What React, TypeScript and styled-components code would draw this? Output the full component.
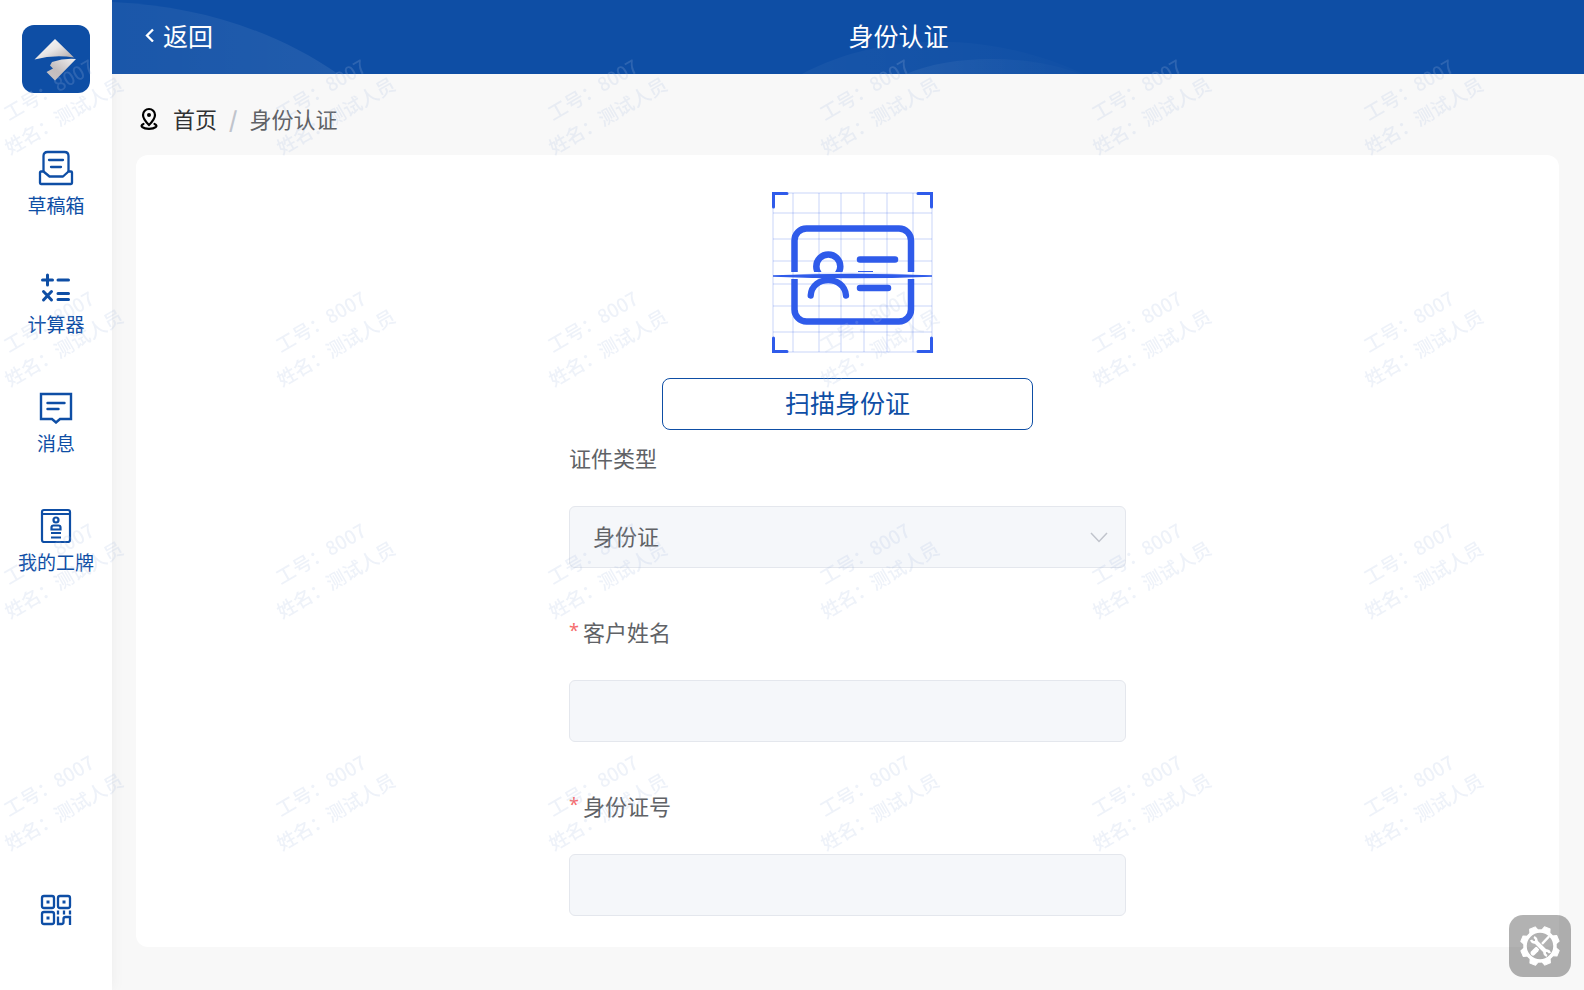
import React from "react";
import styled, { createGlobalStyle } from "styled-components";

const BRAND = "#0e4ea5";
const ACCENT = "#2f5bea";

const GlobalStyle = createGlobalStyle`
  *, *::before, *::after { box-sizing: border-box; }
  body {
    margin: 0;
    background: #f8f8f8;
    color: #606266;
    font-family: "Noto Sans CJK SC", "Noto Sans", sans-serif;
  }
  button, input, select { font-family: inherit; }
`;

const Shell = styled.div`
  display: flex;
  min-height: 100vh;
`;

const Sidebar = styled.aside`
  display: flex;
  flex: none;
  flex-direction: column;
  align-items: center;
  width: 112px;
  padding: 25px 0 64px;
  background: #fff;
  box-shadow: 0 0 14px rgba(0, 0, 0, 0.05);
`;

const SideNav = styled.nav`
  display: flex;
  flex: 1;
  flex-direction: column;
  align-items: center;
  gap: 52px;
  padding-top: 57px;
`;

const SideLink = styled.a`
  display: flex;
  flex-direction: column;
  align-items: center;
  gap: 7px;
  color: ${BRAND};
  font-size: 19px;
  line-height: 24px;
  text-decoration: none;
  white-space: nowrap;
`;

const PlainButton = styled.button`
  display: flex;
  align-items: center;
  padding: 0;
  border: 0;
  background: none;
  color: ${BRAND};
  cursor: pointer;
`;

const Main = styled.div`
  display: flex;
  flex: 1;
  flex-direction: column;
  min-width: 0;
`;

const Header = styled.header`
  position: relative;
  display: flex;
  align-items: center;
  height: 74px;
  padding: 0 0 4px 32px;
  overflow: hidden;
  background: ${BRAND};
  color: #fff;
`;

const HeaderArt = styled.svg`
  position: absolute;
  top: 0;
  left: 0;
`;

const BackButton = styled(PlainButton)`
  position: relative;
  gap: 8px;
  color: #fff;
  font-size: 25px;
  line-height: 36px;
`;

const Title = styled.h1`
  position: relative;
  flex: 1;
  margin: 0;
  font-size: 25px;
  font-weight: 400;
  line-height: 36px;
  text-align: center;
`;

const Content = styled.main`
  display: flex;
  flex: 1;
  flex-direction: column;
  padding: 28px 25px 43px 24px;
`;

const Breadcrumb = styled.nav`
  display: flex;
  align-items: center;
  margin-bottom: 21px;
  padding-left: 4px;
  font-size: 22px;
  line-height: 32px;
`;

const CrumbLink = styled.a`
  margin-left: 15px;
  color: #303133;
  text-decoration: none;
`;

const CrumbDivider = styled.span`
  margin: 0 12px;
  color: #c0c4cc;
  font-weight: 700;
`;

const Card = styled.section`
  display: flex;
  flex: 1;
  flex-direction: column;
  align-items: center;
  padding: 37px 24px 30px;
  border-radius: 12px;
  background: #fff;
`;

const ScanButton = styled.button`
  width: 371px;
  max-width: 100%;
  height: 52px;
  margin-top: 25px;
  padding: 0 0 4px;
  border: 1px solid ${BRAND};
  border-radius: 8px;
  background: #fff;
  color: ${BRAND};
  font-size: 25px;
  line-height: 36px;
  cursor: pointer;
`;

const Form = styled.form`
  display: flex;
  flex-direction: column;
  gap: 36px;
  width: 557px;
  max-width: 100%;
`;

const Field = styled.div`
  display: flex;
  flex-direction: column;
  gap: 18px;
`;

const Label = styled.label<{ $required?: boolean }>`
  display: flex;
  height: 58px;
  font-size: 22px;
  line-height: 54px;
  ${({ $required }) => $required && `
    &::before {
      content: "*";
      margin-right: 4px;
      color: #f56c6c;
      font-family: "Noto Sans", sans-serif;
      font-size: 18px;
      line-height: 52px;
    }
  `}
`;

const controlStyle = `
  width: 100%;
  height: 62px;
  padding: 0 23px;
  border: 1px solid #e4e7ed;
  border-radius: 6px;
  background: #f5f7fa;
  color: #606266;
  font-size: 22px;
`;

const TextBox = styled.input`${controlStyle}`;

const SelectWrap = styled.div`
  position: relative;
  display: flex;
`;

const SelectBox = styled.select`
  ${controlStyle}
  padding-bottom: 4px;
  appearance: none;
`;

const SelectArrow = styled.svg`
  position: absolute;
  top: 26px;
  right: 18px;
  pointer-events: none;
`;

const ToolButton = styled.button`
  position: fixed;
  right: 13px;
  bottom: 13px;
  display: flex;
  align-items: center;
  justify-content: center;
  width: 62px;
  height: 62px;
  padding: 0;
  border: 0;
  border-radius: 14px;
  background: rgba(0, 0, 0, 0.3);
  cursor: pointer;
`;

const WatermarkLayer = styled.div`
  position: fixed;
  inset: 0;
  display: flex;
  flex-direction: column;
  overflow: hidden;
  pointer-events: none;
`;

const WatermarkRow = styled.div`
  display: flex;
  flex: none;
  height: 232px;
`;

const WatermarkTile = styled.div`
  flex: none;
  width: 272px;
  padding-top: 72px;
`;

const WatermarkText = styled.p`
  width: 140px;
  margin: 0 0 0 -14px;
  color: rgba(170, 192, 226, 0.2);
  font-size: 19px;
  font-weight: 500;
  line-height: 30px;
  text-align: center;
  white-space: nowrap;
  transform: rotate(-30deg);
`;

const Logo = () => (
  <svg width="68" height="68" viewBox="0 0 68 68" role="img" aria-label="Logo">
    <defs>
      <linearGradient id="metal" x1="0" y1="0" x2="1" y2="1">
        <stop offset="0" stopColor="#fff" />
        <stop offset="0.5" stopColor="#e9e6e6" />
        <stop offset="1" stopColor="#aaa2a3" />
      </linearGradient>
      <linearGradient id="metalDark" x1="1" y1="0" x2="0" y2="1">
        <stop offset="0" stopColor="#f2f0f0" />
        <stop offset="0.6" stopColor="#c2bcbd" />
        <stop offset="1" stopColor="#c9c4c5" />
      </linearGradient>
    </defs>
    <rect width="68" height="68" rx="12" fill={BRAND} />
    <path d="M12.500 34.500 33 14 52 32.500Q33 29 12.500 34.500Z" fill="url(#metal)" />
    <path d="M54 34 33 55.500 24.500 47 31 43.500 28 40.500 30 37Q42 33 54 34Z" fill="url(#metalDark)" />
  </svg>
);

const DraftIcon = () => (
  <svg width="36" height="36" viewBox="0 0 36 36" fill="none" stroke="currentColor" strokeWidth="2.300">
    <path d="M5.500 22V6q0-4 4-4h17q4 0 4 4v16" />
    <path d="M5.500 21.500H3q-1 0-1 1V33q0 1 1 1h30q1 0 1-1V22.500q0-1-1-1h-2.500L25 26.500H11.500L5.500 21.500Z" strokeLinejoin="round" />
    <path d="M11 10h14M13 17h10" strokeLinecap="round" />
  </svg>
);

const CalcIcon = () => (
  <svg width="36" height="36" viewBox="0 0 36 36" fill="none" stroke="currentColor" strokeWidth="3" strokeLinecap="round">
    <path d="M4.500 11h10M9.500 6v10M20 11h10.500M5.500 22.500l8 8.500M13.500 22.500 5.500 31M20 24.500h10.500M20 30.500h10.500" />
  </svg>
);

const MessageIcon = () => (
  <svg width="36" height="36" viewBox="0 0 36 36" fill="none" stroke="currentColor" strokeWidth="2.400" strokeLinecap="round">
    <path d="M3 6h30v25H22l-4 3.500-4-3.500H3Z" />
    <path d="M9.500 15h17M9.500 21h11" />
  </svg>
);

const BadgeIcon = () => (
  <svg width="36" height="36" viewBox="0 0 36 36" fill="none" stroke="currentColor" strokeWidth="2.200">
    <rect x="4" y="3" width="28" height="32" rx="2" />
    <path d="M4 7h28M13 26h10M13 30.500h10" />
    <circle cx="18" cy="13" r="2.500" />
    <path d="M13.500 22.500v-2q0-2 2-2h5q2 0 2 2v2Z" />
  </svg>
);

const QrIcon = () => (
  <svg width="32" height="32" viewBox="0 0 32 32" fill="none" stroke="currentColor" strokeWidth="2.300">
    <rect x="2" y="2" width="12" height="12" rx="2" />
    <rect x="18" y="2" width="12" height="12" rx="2" />
    <rect x="2" y="18" width="12" height="12" rx="2" />
    <path d="M6.500 8h3M22.500 8h3M6.500 24h3" strokeWidth="3" />
    <path d="M18 16.500v4M24 16.500v4M30 16.500v4M18 22.500V30h3.500q2 0 2-2v-3q0-2 2-2H30V31" />
  </svg>
);

const PinIcon = () => (
  <svg width="18" height="24" viewBox="0 0 18 24" fill="none" stroke="#000" strokeWidth="2.200" strokeLinecap="round">
    <path d="M9 19C5 15 3 12 3 9a6 6 0 0 1 12 0c0 3-2 6-6 10Z" />
    <circle cx="9" cy="9" r="2" fill="#000" stroke="none" />
    <path d="M3.500 18C-1 20 3 22.800 9 22.800S19 20 14.500 18" />
  </svg>
);

const GRID_X = [1, 21, 47, 69, 92, 115, 141, 160];
const GRID_Y = [1, 21, 47, 69, 92, 114, 140, 160];

const ScanArt = () => (
  <svg width="171" height="161" viewBox="-10 0 171 161" fill="none" role="img" aria-label="身份证扫描">
    <defs>
      <linearGradient id="glow" x1="0" y1="0" x2="0" y2="1">
        <stop offset="0" stopColor={ACCENT} stopOpacity="0" />
        <stop offset="1" stopColor={ACCENT} stopOpacity="0.25" />
      </linearGradient>
      <clipPath id="aboveLine"><path d="M0 0h161v80H0Z" /></clipPath>
      <clipPath id="belowLine"><path d="M0 87h161v74H0Z" /></clipPath>
    </defs>
    <g stroke={ACCENT} strokeOpacity="0.26">
      {GRID_X.map((x) => <path key={x} d={`M${x} 1V160`} />)}
      {GRID_Y.map((y) => <path key={y} d={`M1 ${y}H160`} />)}
    </g>
    <path d="M1.500 15V1.500H15M146 1.500H159.500V15M1.500 146V159.500H15M146 159.500H159.500V146" stroke={ACCENT} strokeWidth="3" strokeLinecap="round" />
    <g stroke={ACCENT} strokeWidth="6.500" strokeLinecap="round">
      <g clipPath="url(#aboveLine)">
        <rect x="22.500" y="36.500" width="116.500" height="93" rx="12" />
        <circle cx="56.300" cy="74.500" r="12" />
      </g>
      <g clipPath="url(#belowLine)">
        <rect x="22.500" y="36.500" width="116.500" height="93" rx="12" />
      </g>
      <path d="M38.700 103.500C40 83 72.500 83 74 103.500" strokeWidth="6.300" />
      <path d="M88 67.500H123M88 96H116" />
    </g>
    <path d="M86 79.500H101" stroke={ACCENT} />
    <path d="M20 83Q81 76 141 83Z" fill="url(#glow)" />
    <path d="M1 84Q80 81 160 84Q80 87 1 84Z" fill={ACCENT} stroke={ACCENT} strokeWidth="1.300" />
  </svg>
);

const TEETH = [22, 67, 112, 157, 202, 247, 292, 337];

const GearIcon = () => (
  <svg width="42" height="42" viewBox="-21 -21 42 42" fill="none">
    <circle r="15" stroke="#fff" strokeWidth="3.500" />
    {TEETH.map((a) => (
      <path key={a} d="M-4.500-15-3-19.500H3L4.500-15Z" fill="#fff" stroke="#fff" strokeLinejoin="round" transform={`rotate(${a})`} />
    ))}
    <path d="M8.500-9 1-1" stroke="#fff" strokeWidth="2.500" strokeLinecap="round" />
    <path d="M-3.500 3.500-7 7" stroke="#fff" strokeWidth="5" strokeLinecap="round" />
    <path d="M-5-5 6 6" stroke="#b2b2b2" strokeWidth="6" />
    <path d="M-5-5 6 6" stroke="#fff" strokeWidth="4" />
    <path d="M-9-6A4 4 0 0 0-4-4M-6-9A4 4 0 0 1-4-4M10 7A4 4 0 0 0 5 5M7 10A4 4 0 0 1 5 5" stroke="#fff" strokeWidth="2.500" />
  </svg>
);

const NAV = [
  { label: "草稿箱", Icon: DraftIcon },
  { label: "计算器", Icon: CalcIcon },
  { label: "消息", Icon: MessageIcon },
  { label: "我的工牌", Icon: BadgeIcon },
];

const Watermark = () => (
  <WatermarkLayer aria-hidden="true">
    {Array.from({ length: 4 }, (_, row) => (
      <WatermarkRow key={row}>
        {Array.from({ length: 6 }, (_, col) => (
          <WatermarkTile key={col}>
            <WatermarkText>工号：8007<br />姓名：测试人员</WatermarkText>
          </WatermarkTile>
        ))}
      </WatermarkRow>
    ))}
  </WatermarkLayer>
);

export default function App() {
  return (
    <>
      <GlobalStyle />
      <Shell>
        <Sidebar>
          <Logo />
          <SideNav>
            {NAV.map(({ label, Icon }) => (
              <SideLink key={label} href="#"><Icon />{label}</SideLink>
            ))}
          </SideNav>
          <PlainButton type="button" aria-label="二维码"><QrIcon /></PlainButton>
        </Sidebar>
        <Main>
          <Header>
            <HeaderArt width="1100" height="74" aria-hidden="true">
              <defs>
                <linearGradient id="arc" x1="0" y1="0" x2="1" y2="0">
                  <stop offset="0" stopColor="#fff" stopOpacity="0.05" />
                  <stop offset="1" stopColor="#fff" stopOpacity="0.08" />
                </linearGradient>
                <linearGradient id="arcFade" x1="0" y1="0" x2="1" y2="0">
                  <stop offset="0" stopColor="#fff" stopOpacity="0.04" />
                  <stop offset="1" stopColor="#fff" stopOpacity="0.01" />
                </linearGradient>
                <linearGradient id="arcInner" x1="0" y1="0" x2="1" y2="0">
                  <stop offset="0" stopColor="#fff" stopOpacity="0.06" />
                  <stop offset="1" stopColor="#fff" stopOpacity="0.01" />
                </linearGradient>
              </defs>
              <path d="M0 2C90 6 165 32 226 74H0Z" fill="url(#arc)" />
              <path d="M690 74C770 31 880 31 972 74Z" fill="url(#arcFade)" />
              <path d="M794 74C840 54 918 54 968 74Z" fill="url(#arcInner)" />
            </HeaderArt>
            <BackButton type="button">
              <svg width="11" height="14" viewBox="0 0 11 14" fill="none" stroke="#fff" strokeWidth="2.300">
                <path d="M9 1.500 3 7.500 9 13.500" />
              </svg>
              返回
            </BackButton>
            <Title>身份认证</Title>
          </Header>
          <Content>
            <Breadcrumb aria-label="面包屑">
              <PinIcon />
              <CrumbLink href="#">首页</CrumbLink>
              <CrumbDivider>/</CrumbDivider>
              <span>身份认证</span>
            </Breadcrumb>
            <Card>
              <ScanArt />
              <ScanButton type="button">扫描身份证</ScanButton>
              <Form>
                <Field>
                  <Label htmlFor="idType">证件类型</Label>
                  <SelectWrap>
                    <SelectBox id="idType"><option>身份证</option></SelectBox>
                    <SelectArrow width="18" height="12" viewBox="0 0 18 12" fill="none" stroke="#c0c4cc" strokeWidth="1.500" aria-hidden="true">
                      <path d="M1 1 9 9.500 17 1" />
                    </SelectArrow>
                  </SelectWrap>
                </Field>
                <Field>
                  <Label htmlFor="name" $required>客户姓名</Label>
                  <TextBox id="name" type="text" />
                </Field>
                <Field>
                  <Label htmlFor="idNumber" $required>身份证号</Label>
                  <TextBox id="idNumber" type="text" />
                </Field>
              </Form>
            </Card>
          </Content>
        </Main>
      </Shell>
      <Watermark />
      <ToolButton type="button" aria-label="工具"><GearIcon /></ToolButton>
    </>
  );
}
